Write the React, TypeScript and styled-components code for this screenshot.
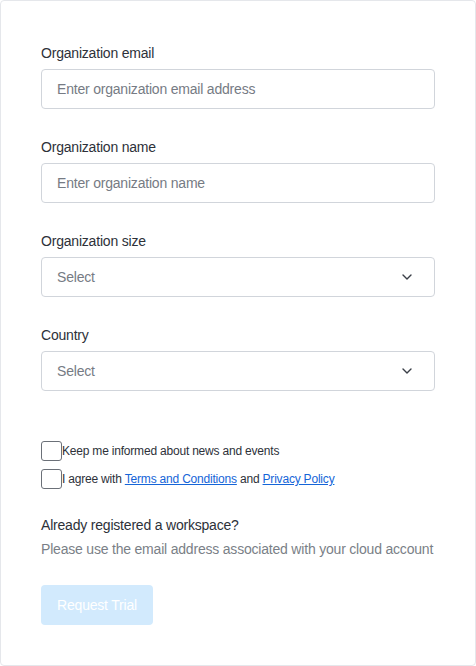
import React from "react";
import styled, { createGlobalStyle } from "styled-components";

const Global = createGlobalStyle`
  * { box-sizing: border-box; }
  html, body { margin: 0; padding: 0; background: #ffffff; }
  body { font-family: "Liberation Sans", Arial, sans-serif; letter-spacing: -0.2px; }
`;

const Card = styled.form`
  width: 476px;
  height: 666px;
  border: 1px solid #e5e7eb;
  border-radius: 4px;
  padding: 42px 40px 40px;
  display: flex;
  flex-direction: column;
  background: #fff;
  & > * { flex-shrink: 0; }
`;

const Field = styled.div`
  display: flex;
  flex-direction: column;
  gap: 6px;
  margin-bottom: 28px;
`;

const Label = styled.label`
  font-size: 14px;
  line-height: 20px;
  color: #2d3139;
`;

const Input = styled.input`
  height: 40px;
  width: 100%;
  border: 1px solid #d1d5db;
  border-radius: 4px;
  padding: 0 15px;
  font-family: inherit;
  letter-spacing: -0.2px;
  font-size: 14px;
  color: #2d3139;
  outline: none;
  &::placeholder { color: #767b84; }
`;

const SelectBox = styled.div`
  height: 40px;
  border: 1px solid #d1d5db;
  border-radius: 4px;
  padding: 0 22px 0 15px;
  display: flex;
  align-items: center;
  justify-content: space-between;
  font-size: 14px;
  color: #767b84;
`;

const Checks = styled.div`
  display: flex;
  flex-direction: column;
  gap: 8px;
  margin-top: 22px;
`;

const CheckRow = styled.label`
  display: flex;
  align-items: center;
  font-size: 12px;
  line-height: 20px;
  color: #2d3139;
`;

const Box = styled.span`
  width: 21px;
  height: 20px;
  border: 1px solid #6b7078;
  border-radius: 3px;
  flex: none;
`;

const Link = styled.a`
  color: #1565d8;
  text-decoration: underline;
`;

const Heading = styled.div`
  font-size: 14px;
  line-height: 20px;
  color: #2d3139;
  margin-top: 26px;
`;

const Sub = styled.div`
  font-size: 14px;
  line-height: 20px;
  color: #7a7f87;
  margin-top: 4px;
  white-space: nowrap;
`;

const Button = styled.button`
  margin-top: 26px;
  width: 112px;
  height: 40px;
  border: none;
  border-radius: 4px;
  background: #d2eafd;
  color: #ffffff;
  font-family: inherit;
  letter-spacing: -0.2px;
  font-size: 14px;
  cursor: not-allowed;
`;

const Chevron = () => (
  <svg width="10" height="6" viewBox="0 0 10 6" fill="none">
    <path d="M1 1l4 4 4-4" stroke="#3a3f47" strokeWidth="1.4" strokeLinecap="round" strokeLinejoin="round" />
  </svg>
);

export default function App() {
  return (
    <>
      <Global />
      <Card onSubmit={(e) => e.preventDefault()}>
        <Field>
          <Label>Organization email</Label>
          <Input placeholder="Enter organization email address" />
        </Field>
        <Field>
          <Label>Organization name</Label>
          <Input placeholder="Enter organization name" />
        </Field>
        <Field>
          <Label>Organization size</Label>
          <SelectBox>
            Select
            <Chevron />
          </SelectBox>
        </Field>
        <Field>
          <Label>Country</Label>
          <SelectBox>
            Select
            <Chevron />
          </SelectBox>
        </Field>
        <Checks>
          <CheckRow>
            <Box />
            Keep me informed about news and events
          </CheckRow>
          <CheckRow>
            <Box />
            I agree with&nbsp;<Link href="#">Terms and Conditions</Link>&nbsp;and&nbsp;
            <Link href="#">Privacy Policy</Link>
          </CheckRow>
        </Checks>
        <Heading>Already registered a workspace?</Heading>
        <Sub>Please use the email address associated with your cloud account</Sub>
        <Button type="submit" disabled>Request Trial</Button>
      </Card>
    </>
  );
}
